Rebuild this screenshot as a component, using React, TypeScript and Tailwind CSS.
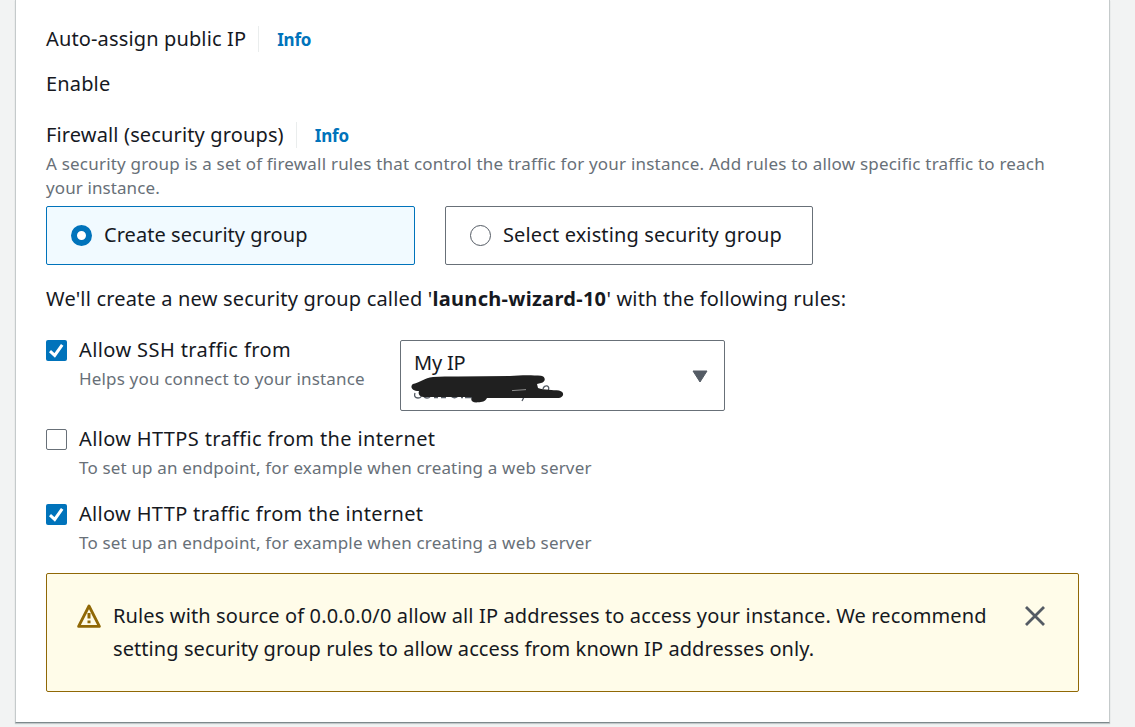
import React from "react";

function InfoLink() {
  return (
    <a className="ml-3 flex h-[26px] items-center border-l border-[#eaeded] pt-0.5 pl-[18px] text-[17px] leading-6 font-bold tracking-[-0.2px] text-[#0073bb]">
      Info
    </a>
  );
}

function Checkbox({ checked }: { checked?: boolean }) {
  return checked ? (
    <span className="mt-[7px] flex size-[21px] shrink-0 rounded-[2px] bg-[#0073bb]">
      <svg viewBox="0 0 21 21" className="size-[21px]" fill="none" stroke="#fff" strokeWidth="3">
        <path d="M4 11.2 L8.7 15.4 L16.2 4.8" />
      </svg>
    </span>
  ) : (
    <span className="mt-[7px] size-[21px] shrink-0 rounded-[2px] border border-[#687078] bg-white" />
  );
}

function Hint({ children, className = "" }: { children: React.ReactNode; className?: string }) {
  return (
    <span className={`block pt-px text-[17px] leading-6 whitespace-nowrap text-[#687078] ${className}`}>{children}</span>
  );
}

function SourceSelect() {
  return (
    <div className="relative mt-[7px] flex h-[71px] w-[325px] items-start justify-between rounded-[2px] border border-[#687078] pl-[13px]">
      <div>
        <span className="block pt-[7px] text-[20px] leading-[30px] tracking-[-0.2px]">My IP</span>
      </div>
      <svg viewBox="0 0 16 13" className="mt-[29px] mr-4 h-[13px] w-4" fill="#545b64" stroke="#545b64" strokeLinejoin="round">
        <path d="M1 1 H15 L8 12 Z" />
      </svg>
      <svg viewBox="0 0 156 34" className="absolute top-[34px] left-[9px] h-[34px] w-[156px]" fill="none">
        <g stroke="#545b64" strokeWidth="1.3">
          <path d="M5 18c-1 3 0 5 3 5s4-2 3-4M14 18c-1 3 0 5 3 5s4-2 3-4M24 22.6h4M31 22.6h5M41 19c0 5 7 5 7 0M51 22.6h2M55 22.6h7M114 22l-2 4M133 14c1-5 8-4 5 2" />
        </g>
        <path
          d="M3 9 C11 7 14 3 23 2 C31 1 38 1.5 48 1.5 L100 1 C110 0 122 0 131 0.7 C136 1.5 136 7 131 8 L127 9 L128 13 C134 15 143 15 149 15.5 C155 17 154 22 149 23 H77 C75 27 72 27 68 27.3 C62 28 60 25 62 22 L13 22 C9 21 8 19 9 16 C1 16 0 11 3 9 Z"
          fill="#202020"
        />
        <path d="M102 15.6 L116 14.6" stroke="#aaa" strokeWidth="0.8" />
      </svg>
    </div>
  );
}

function WarningAlert() {
  return (
    <div className="mt-[18px] flex h-[119px] rounded-[2px] border border-[#906806] bg-[#fffce9] pt-[25px] pl-[30px]">
      <svg viewBox="0 0 24 24" className="mt-[5px] size-6 shrink-0" fill="none" stroke="#906806">
        <path d="M12 2 L22.4 22.4 H1.6 Z" strokeWidth="2.8" strokeLinejoin="round" />
        <path d="M12 9 V14.6 M12 16.4 V19.2" strokeWidth="3" />
      </svg>
      <div className="ml-3 text-[20px] leading-[33px] whitespace-nowrap">
        <p className="tracking-[0.13px]">
          Rules with source of 0.0.0.0/0 allow all IP addresses to access your instance. We recommend
        </p>
        <p className="tracking-[0.08px]">setting security group rules to allow access from known IP addresses only.</p>
      </div>
      <svg viewBox="0 0 20 20" className="mt-[7px] mr-[33px] ml-auto size-5 shrink-0" fill="none" stroke="#545b64" strokeWidth="2.8">
        <path d="M1 1 L19 19 M19 1 L1 19" />
      </svg>
    </div>
  );
}

export default function App() {
  return (
    <div className="h-[727px] w-[1135px] overflow-hidden bg-[#f2f3f3] pl-[15px] font-['Noto_Sans','Open_Sans',sans-serif] text-[20px] leading-[33px] text-[#16191f]">
      <div className="h-[723px] w-[1095px] border-x border-b border-x-[#c5cacb] border-b-[#7d898c] bg-white pt-[22px] pr-[30px] pl-[30px] shadow-[0_1px_1px_0_rgba(0,28,36,0.2)]">
        <div className="flex items-center">
          <span className="tracking-[0.14px]">Auto-assign public IP</span>
          <InfoLink />
        </div>
        <p className="mt-3 tracking-[0.15px]">Enable</p>
        <div className="mt-[18px] flex items-center">
          <span className="tracking-[0.14px]">Firewall (security groups)</span>
          <InfoLink />
        </div>
        <Hint className="tracking-[0.205px]">
          A security group is a set of firewall rules that control the traffic for your instance. Add rules to allow specific traffic to reach
        </Hint>
        <Hint className="-mt-px tracking-[0.1px]">your instance.</Hint>
        <div className="mt-[6px] flex gap-[30px]">
          <div className="flex h-[59px] w-[369px] items-center rounded-[2px] border border-[#0073bb] bg-[#f1faff] pl-6">
            <span className="size-[21px] rounded-full border-[6px] border-[#0073bb] bg-white" />
            <span className="ml-3 pb-0.5 tracking-[0.05px]">Create security group</span>
          </div>
          <div className="flex h-[59px] w-[368px] items-center rounded-[2px] border border-[#687078] pl-6">
            <span className="size-[21px] rounded-full border border-[#545b64] bg-white" />
            <span className="ml-3 pb-0.5 tracking-[0.13px]">Select existing security group</span>
          </div>
        </div>
        <p className="mt-[17px] tracking-[0.18px] whitespace-nowrap">
          We'll create a new security group called '<b className="tracking-[0.3px]">launch-wizard-10</b>' with the following rules:
        </p>
        <div className="mt-[18px] flex h-[89px]">
          <div className="flex w-[354px]">
            <Checkbox checked />
            <div className="ml-3">
              <span className="block tracking-[0.4px]">Allow SSH traffic from</span>
              <Hint className="tracking-[0.17px]">Helps you connect to your instance</Hint>
            </div>
          </div>
          <SourceSelect />
        </div>
        <div className="flex h-[75px]">
          <Checkbox />
          <div className="ml-3">
            <span className="block tracking-[0.35px]">Allow HTTPS traffic from the internet</span>
            <Hint className="tracking-[0.165px]">To set up an endpoint, for example when creating a web server</Hint>
          </div>
        </div>
        <div className="flex h-[58px]">
          <Checkbox checked />
          <div className="ml-3">
            <span className="block tracking-[0.33px]">Allow HTTP traffic from the internet</span>
            <Hint className="tracking-[0.165px]">To set up an endpoint, for example when creating a web server</Hint>
          </div>
        </div>
        <WarningAlert />
      </div>
    </div>
  );
}
